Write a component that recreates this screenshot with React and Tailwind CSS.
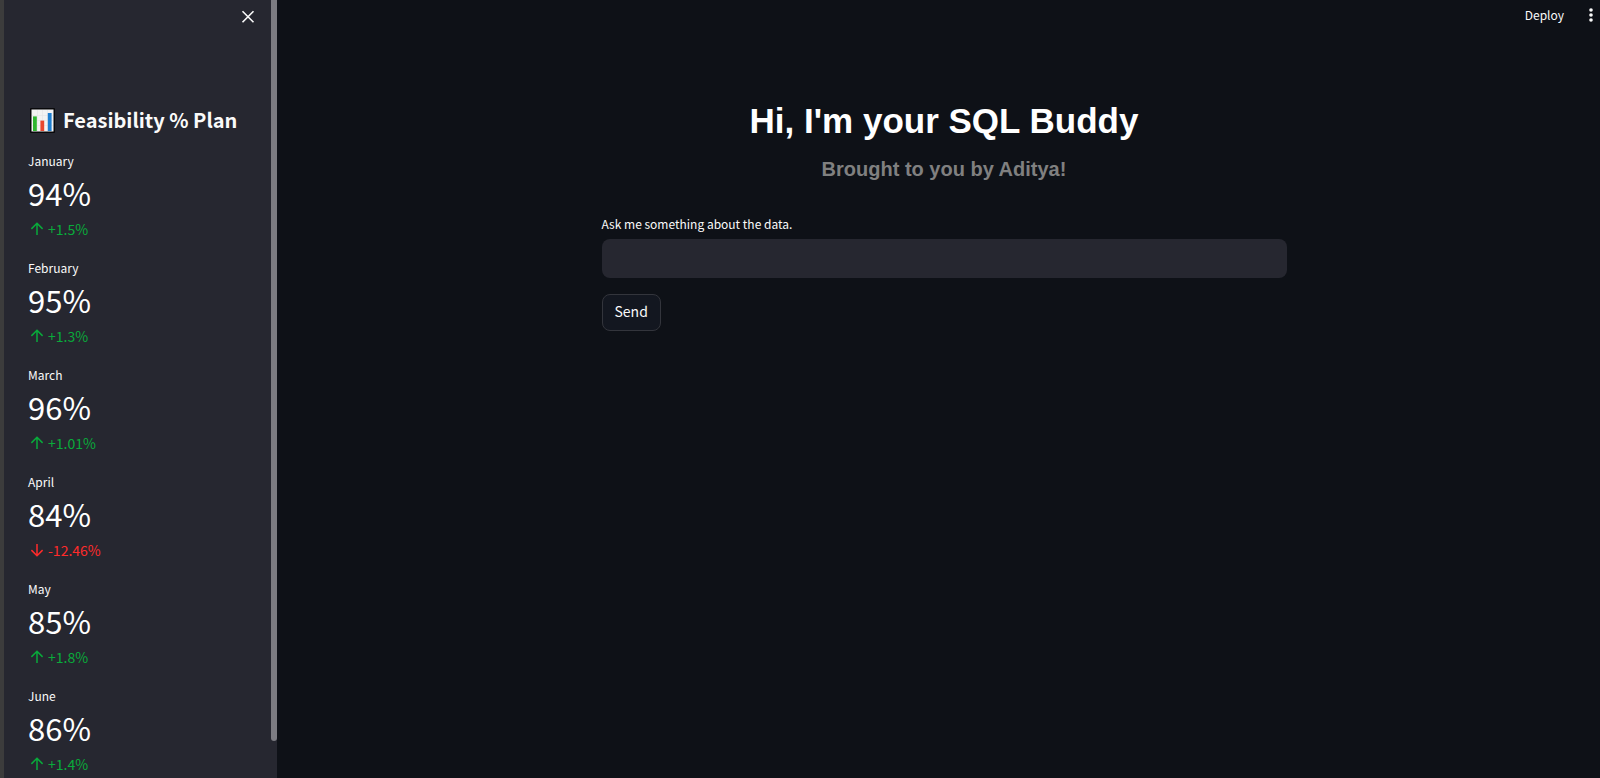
const metrics = [
  { month: "January", value: "94%", delta: "+1.5%" },
  { month: "February", value: "95%", delta: "+1.3%" },
  { month: "March", value: "96%", delta: "+1.01%" },
  { month: "April", value: "84%", delta: "-12.46%" },
  { month: "May", value: "85%", delta: "+1.8%" },
  { month: "June", value: "86%", delta: "+1.4%" },
];

function BarChartIcon() {
  return (
    <svg viewBox="0 0 25 25" className="h-[25px] w-[25px] shrink-0" aria-hidden="true">
      <rect width="25" height="25" rx="1" fill="#08080a" />
      <rect x="1.5" y="1.5" width="22" height="22" fill="#f3f3f3" />
      <path d="M2 7.5h21M2 12.5h21M2 17.5h21M7.5 2v21M12.5 2v21M17.5 2v21" stroke="#e4e4e6" strokeWidth="0.6" />
      <rect x="3" y="8.4" width="3.8" height="14.6" fill="#2fb52f" />
      <rect x="10.4" y="12.6" width="3.8" height="10.4" fill="#e8472f" />
      <rect x="17.8" y="5" width="3.8" height="18" fill="#1f7fd0" />
    </svg>
  );
}

function DeltaArrow({ down }) {
  return (
    <svg viewBox="0 0 14 14" className="h-[14px] w-[14px] shrink-0" fill="none" stroke="currentColor" strokeWidth="1.5" aria-hidden="true">
      {down ? <path d="M7 1v11.3M1.4 7.1 7 12.7l5.6-5.6" /> : <path d="M7 13V1.7M1.4 6.9 7 1.3l5.6 5.6" />}
    </svg>
  );
}

function Metric({ month, value, delta }) {
  const down = delta.startsWith("-");
  return (
    <div className="flex flex-col">
      <dt className="text-[12px] leading-[19px]">{month}</dt>
      <dd className="text-[31px] leading-[46px] text-white">{value}</dd>
      <dd className={`flex items-center gap-1 pl-[2px] text-[14px] leading-[26px] ${down ? "text-[#ff2b2b]" : "text-[#09ab3b]"}`}>
        <DeltaArrow down={down} />
        {delta}
      </dd>
    </div>
  );
}

export default function App() {
  return (
    <div className="flex h-screen overflow-hidden bg-[#0e1117] font-['Noto_Sans_CJK_SC',sans-serif] text-[#fafafa]">
      <aside className="flex w-[277px] shrink-0 border-l-4 border-[#3c3c3c] bg-[#262730]">
        <div className="min-w-0 flex-1 overflow-hidden pl-6">
          <div className="flex h-[104px] items-start justify-end pt-[9px] pr-[15px]">
            <button type="button" aria-label="Close sidebar" className="flex h-4 w-4 items-center justify-center">
              <svg viewBox="0 0 16 16" className="h-4 w-4" fill="none" stroke="currentColor" strokeWidth="1.6" aria-hidden="true">
                <path d="M2.5 2.2 13.5 13.2M13.5 2.2 2.5 13.2" />
              </svg>
            </button>
          </div>
          <h2 className="flex items-center gap-2 pl-[2px] text-[20px] leading-8 font-bold whitespace-nowrap">
            <BarChartIcon />
            Feasibility % Plan
          </h2>
          <dl className="mt-[15px] flex flex-col gap-4">
            {metrics.map((m) => (
              <Metric key={m.month} {...m} />
            ))}
          </dl>
        </div>
        <div className="h-[741px] w-[6px] shrink-0 rounded-b-sm bg-[#7c7c82]" />
      </aside>

      <main className="flex min-w-0 flex-1 flex-col">
        <header className="flex h-[30px] items-center justify-end gap-6 pr-[6px]">
          <button type="button" className="pb-px text-[12px] leading-5">Deploy</button>
          <button type="button" aria-label="Menu" className="flex h-5 w-[6px] items-center justify-center">
            <svg viewBox="0 0 4 14" className="h-[14px] w-1" fill="currentColor" aria-hidden="true">
              <circle cx="2" cy="2" r="1.8" />
              <circle cx="2" cy="7" r="1.8" />
              <circle cx="2" cy="12" r="1.8" />
            </svg>
          </button>
        </header>
        <div className="flex flex-col items-center pt-[66px] pl-[11px]">
          <div className="flex w-full max-w-[685px] flex-col">
            <h1 className="text-center font-['Liberation_Sans',sans-serif] text-[35px] leading-[50px] font-bold text-white">
              Hi, I'm your SQL Buddy
            </h1>
            <h3 className="mt-[6px] text-center font-['Liberation_Sans',sans-serif] text-[20px] leading-[34px] font-bold text-[#808080]">
              Brought to you by Aditya!
            </h3>
            <form className="mt-7 flex flex-col items-start" onSubmit={(e) => e.preventDefault()}>
              <label htmlFor="question" className="text-[12px] leading-5">
                Ask me something about the data.
              </label>
              <input
                id="question"
                type="text"
                className="mt-[5px] h-[39px] w-full rounded-lg bg-[#262730] px-3 text-[14px] outline-none"
              />
              <button type="submit" className="mt-4 flex h-[37px] items-center rounded-lg border border-[#33353c] bg-[#131720] px-3 pb-1 text-[14px] leading-5">
                Send
              </button>
            </form>
          </div>
        </div>
      </main>
    </div>
  );
}
